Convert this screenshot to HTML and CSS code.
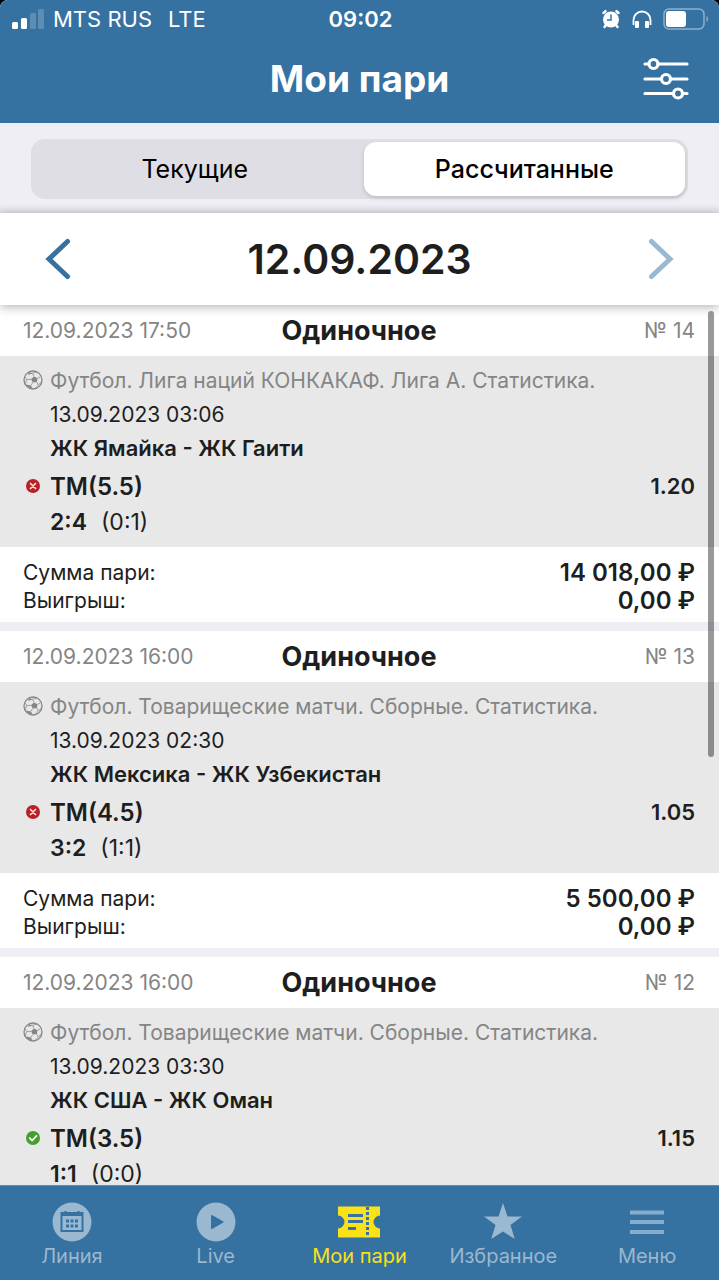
FILE: index.html
```html
<!DOCTYPE html>
<html lang="ru">
<head>
    <meta charset="UTF-8">
    <meta name="viewport" content="width=device-width, initial-scale=1">
    <title>Мои пари</title>
    <link rel="stylesheet" href="styles.css">
</head>
<body>
    <svg class="sprite" aria-hidden="true">
        <symbol id="ball" viewBox="0 0 20 20">
            <circle cx="10" cy="10" r="9" fill="none" stroke="#858585" stroke-width="1.3"/>
            <path d="M11 6.500l3.500 1.800-.7 3.700-4 .6-1.800-3.300z" fill="#858585"/>
            <path d="M11 6.500L9.500 3.200M14.500 8.300l3-1.500M13.800 12l1.500 3M9.800 12.600L7.600 15.600M8 9.300L3.500 9.500M9.500 3.200L5 4.200M9.500 3.200l4.500-1M3.500 9.500L2 6.500M3.500 9.500L2.500 14M7.600 15.600l1.800 3M15.300 15l-3 3M15.300 15l2.800-3" fill="none" stroke="#a0a0a0" stroke-width="1"/>
            <path d="M3 14.500l4.600 1 1.400 3c-2.500-.2-4.800-1.700-6-4zM6.500 2.200l3 1L5 4.800z" fill="#858585"/>
        </symbol>
        <symbol id="lost" viewBox="0 0 14 14">
            <circle cx="7" cy="7" r="7" fill="#b8202a"/>
            <path d="M4.500 4.500l5 5M9.500 4.500l-5 5" stroke="#fbe6c8" stroke-width="1.700" stroke-linecap="round"/>
        </symbol>
        <symbol id="won" viewBox="0 0 14 14">
            <circle cx="7" cy="7" r="7" fill="#43a02c"/>
            <path d="M3.700 7.200l2.400 2.300 4.400-4.600" fill="none" stroke="#fff" stroke-width="1.800" stroke-linecap="round"/>
        </symbol>
    </svg>

    <div class="app">
        <header class="header">
            <div class="status">
                <div class="status-left">
                    <svg width="33" height="22" viewBox="0 0 33 22" fill="#fff" aria-hidden="true">
                        <rect x="0" y="14" width="6" height="7" rx="1.500"/>
                        <rect x="9" y="10" width="6" height="11" rx="1.500"/>
                        <rect x="18" y="5" width="6" height="16" rx="1.500" opacity=".2"/>
                        <rect x="26" y="1" width="6" height="20" rx="1.500" opacity=".2"/>
                    </svg>
                    <span>MTS RUS</span>
                    <span class="network">LTE</span>
                </div>
                <div class="clock">09:02</div>
                <div class="status-right">
                    <svg width="20" height="20" viewBox="0 0 20 20" aria-hidden="true">
                        <circle cx="10" cy="10.500" r="8" fill="#fff"/>
                        <path d="M2.500 4l2-1.800M17.500 4l-2-1.800M4.500 16.500l-1 1.500M15.500 16.500l1 1.500" stroke="#fff" stroke-width="2.500" stroke-linecap="round"/>
                        <path d="M10 5.500v5.500H6" fill="none" stroke="#3571a1" stroke-width="1.500"/>
                    </svg>
                    <svg width="20" height="20" viewBox="0 0 20 20" aria-hidden="true">
                        <path d="M1.500 16v-5a8.500 8.500 0 0 1 17 0v5" fill="none" stroke="#fff" stroke-width="1.800"/>
                        <rect x="3" y="12" width="4" height="7" rx="1" fill="#fff"/>
                        <rect x="13" y="12" width="4" height="7" rx="1" fill="#fff"/>
                    </svg>
                    <svg width="46" height="22" viewBox="0 0 46 22" aria-hidden="true">
                        <rect x="1" y="1" width="40" height="20" rx="5" fill="none" stroke="#8fb1cb" stroke-width="1.500"/>
                        <rect x="3" y="3" width="20" height="16" rx="3" fill="#fff"/>
                        <path d="M43.500 8c2 1 2 5 0 6z" fill="#8fb1cb"/>
                    </svg>
                </div>
            </div>
            <div class="title-bar">
                <h1>Мои пари</h1>
                <button class="filter" type="button" aria-label="Фильтр">
                    <svg width="46" height="44" viewBox="0 0 46 44" fill="none" stroke="#fff" stroke-width="3.200" stroke-linecap="round">
                        <path d="M2 7h4M15 7h29M2 22h16M28 22h16M2 36.500h28M40 36.500h4"/>
                        <circle cx="10.500" cy="7" r="4.500"/>
                        <circle cx="23" cy="22" r="4.500"/>
                        <circle cx="35" cy="36.500" r="4.500"/>
                    </svg>
                </button>
            </div>
        </header>

        <div class="segments">
            <div class="segmented">
                <button type="button" class="segment">Текущие</button>
                <button type="button" class="segment active">Рассчитанные</button>
            </div>
        </div>

        <div class="date-bar">
            <button type="button" aria-label="Предыдущий день">
                <svg width="26" height="44" viewBox="0 0 26 44"><path d="M22.500 4.500L4 22l18.500 17.500" fill="none" stroke="#3571a1" stroke-width="5" stroke-linecap="round" stroke-linejoin="miter"/></svg>
            </button>
            <h2>12.09.2023</h2>
            <button type="button" aria-label="Следующий день">
                <svg width="26" height="44" viewBox="0 0 26 44"><path d="M3.500 4.500L22 22 3.500 39.500" fill="none" stroke="#9ab8d0" stroke-width="5" stroke-linecap="round" stroke-linejoin="miter"/></svg>
            </button>
        </div>

        <main class="list">
            <article class="bet">
                <div class="bet-head">
                    <span>12.09.2023 17:50</span>
                    <h3>Одиночное</h3>
                    <span class="number">№ 14</span>
                </div>
                <div class="event">
                    <svg class="ball"><use href="#ball"/></svg>
                    <p class="league">Футбол. Лига наций КОНКАКАФ. Лига А. Статистика.</p>
                    <p class="time">13.09.2023 03:06</p>
                    <p class="teams">ЖК Ямайка - ЖК Гаити</p>
                    <svg class="result"><use href="#lost"/></svg>
                    <p class="outcome"><span>ТМ(5.5)</span><span class="odds">1.20</span></p>
                    <p class="score"><b>2:4</b><span>(0:1)</span></p>
                </div>
                <dl class="sums">
                    <dt>Сумма пари:</dt><dd>14 018,00 ₽</dd>
                    <dt>Выигрыш:</dt><dd>0,00 ₽</dd>
                </dl>
            </article>

            <article class="bet">
                <div class="bet-head">
                    <span>12.09.2023 16:00</span>
                    <h3>Одиночное</h3>
                    <span class="number">№ 13</span>
                </div>
                <div class="event">
                    <svg class="ball"><use href="#ball"/></svg>
                    <p class="league">Футбол. Товарищеские матчи. Сборные. Статистика.</p>
                    <p class="time">13.09.2023 02:30</p>
                    <p class="teams">ЖК Мексика - ЖК Узбекистан</p>
                    <svg class="result"><use href="#lost"/></svg>
                    <p class="outcome"><span>ТМ(4.5)</span><span class="odds">1.05</span></p>
                    <p class="score"><b>3:2</b><span>(1:1)</span></p>
                </div>
                <dl class="sums">
                    <dt>Сумма пари:</dt><dd>5 500,00 ₽</dd>
                    <dt>Выигрыш:</dt><dd>0,00 ₽</dd>
                </dl>
            </article>

            <article class="bet">
                <div class="bet-head">
                    <span>12.09.2023 16:00</span>
                    <h3>Одиночное</h3>
                    <span class="number">№ 12</span>
                </div>
                <div class="event">
                    <svg class="ball"><use href="#ball"/></svg>
                    <p class="league">Футбол. Товарищеские матчи. Сборные. Статистика.</p>
                    <p class="time">13.09.2023 03:30</p>
                    <p class="teams">ЖК США - ЖК Оман</p>
                    <svg class="result"><use href="#won"/></svg>
                    <p class="outcome"><span>ТМ(3.5)</span><span class="odds">1.15</span></p>
                    <p class="score"><b>1:1</b><span>(0:0)</span></p>
                </div>
            </article>
            <div class="scroll-thumb"></div>
        </main>

        <nav class="tabs">
            <a href="#">
                <svg width="40" height="40" viewBox="0 0 40 40">
                    <circle cx="20" cy="20" r="19.500" fill="#9ab8d0"/>
                    <path d="M9.500 11h21v18h-21zM9.500 13h21M13.500 9v3M26.500 9v3" fill="none" stroke="#3571a1" stroke-width="2"/>
                    <path d="M14 17.500h3v3h-3zM18.500 17.500h3v3h-3zM23 17.500h3v3h-3zM14 22.500h3v3h-3zM18.500 22.500h3v3h-3zM23 22.500h3v3h-3z" fill="#3571a1"/>
                </svg>
                <span>Линия</span>
            </a>
            <a href="#">
                <svg width="40" height="40" viewBox="0 0 40 40">
                    <circle cx="20" cy="20" r="19.500" fill="#9ab8d0"/>
                    <path d="M16 14l10.500 6-10.500 6z" fill="#3571a1" stroke="#3571a1" stroke-width="2" stroke-linejoin="round"/>
                </svg>
                <span>Live</span>
            </a>
            <a href="#" class="active">
                <svg width="44" height="40" viewBox="0 0 44 40">
                    <path d="M1 4.500h42v9a6.500 6.500 0 0 0 0 13v9H1v-9a6.500 6.500 0 0 0 0-13z" fill="#fbe118"/>
                    <path d="M11 13.500h15M11 19.500h15M11 26.500h8" stroke="#3571a1" stroke-width="3"/>
                    <path d="M30.500 5v30" stroke="#3571a1" stroke-width="3" stroke-dasharray="3 2"/>
                </svg>
                <span>Мои пари</span>
            </a>
            <a href="#">
                <svg width="40" height="40" viewBox="0 0 40 40">
                    <path d="M20 1l4.500 13.500H39l-11.500 8.500 4.300 14L20 29.500 8.200 37l4.300-14L1 14.500h14.500z" fill="#9ab8d0"/>
                </svg>
                <span>Избранное</span>
            </a>
            <a href="#">
                <svg width="40" height="40" viewBox="0 0 40 40">
                    <path d="M3 10.500h34M3 20h34M3 30h34" stroke="#86adcb" stroke-width="4"/>
                </svg>
                <span>Меню</span>
            </a>
        </nav>
    </div>
</body>
</html>
```

FILE: styles.css
```css
* {
    box-sizing: border-box;
}

body {
    margin: 0;
    background: #000;
    font-family: Inter, "Liberation Sans", sans-serif;
    font-size: 21px;
    color: #1e1e1e;
}

h1, h2, h3, p, dl, dd {
    margin: 0;
}

button {
    border: 0;
    padding: 0;
    background: none;
    font: inherit;
    color: inherit;
    cursor: pointer;
}

svg {
    display: block;
}

.sprite {
    position: absolute;
    width: 0;
    height: 0;
}

.app {
    display: flex;
    flex-direction: column;
    height: 100vh;
    overflow: hidden;
    border-radius: 8px 8px 0 0;
    background: #efeef4;
}

/* header */

.header {
    background: #3571a1;
    color: #fff;
}

.status {
    display: grid;
    grid-template-columns: 1fr auto 1fr;
    align-items: center;
    height: 38px;
    padding: 0 10px 0 12px;
    font-size: 22px;
}

.status-left, .status-right {
    display: flex;
    align-items: center;
    gap: 8px;
}

.status-right {
    justify-content: flex-end;
    gap: 11px;
}

.network {
    margin-left: 8px;
}

.clock {
    font-weight: 600;
}

.title-bar {
    display: grid;
    grid-template-columns: 1fr auto 1fr;
    align-items: center;
    height: 85px;
    padding: 0 30px 3px;
}

.title-bar h1 {
    grid-column: 2;
    font-size: 37px;
    line-height: 44px;
    font-weight: 700;
}

.filter {
    justify-self: end;
}

/* segmented control */

.segments {
    padding: 16px 31px 14px;
    background: linear-gradient(#efeef4 90%, #e2e1e7);
}

.segmented {
    display: grid;
    grid-template-columns: 1fr 1fr;
    gap: 8px;
    height: 60px;
    padding: 3px;
    border-radius: 14px;
    background: #dedee4;
}

.segment {
    border-radius: 12px;
    font-size: 25px;
    color: #000;
}

.segment.active {
    background: #fff;
    font-weight: 500;
    box-shadow: 0 2px 4px rgba(0, 0, 0, 0.15);
}

/* date */

.date-bar {
    position: relative;
    z-index: 1;
    display: flex;
    justify-content: space-between;
    align-items: center;
    height: 92px;
    padding: 0 45px;
    background: #fff;
    box-shadow: 0 2px 10px rgba(0, 0, 0, 0.3);
}

.date-bar h2 {
    font-size: 41px;
    font-weight: 600;
}

/* bets */

.list {
    position: relative;
    flex: 1;
    min-height: 0;
    overflow: hidden;
}

.bet {
    margin-bottom: 9px;
    background: #fff;
}

.bet-head {
    display: grid;
    grid-template-columns: 1fr auto 1fr;
    align-items: center;
    height: 51px;
    padding: 0 24px 0 23px;
    color: #858585;
}

.bet-head h3 {
    font-size: 27px;
    font-weight: 700;
    color: #1e1e1e;
}

.number {
    text-align: right;
}

.event {
    display: grid;
    grid-template-columns: 27px 1fr;
    grid-template-rows: 34px 34px 34px 42px 30px;
    align-items: center;
    padding: 7px 24px 10px 23px;
    background: #e8e8e8;
}

.event p {
    grid-column: 2;
}

.ball {
    width: 20px;
    height: 20px;
}

.result {
    width: 14px;
    height: 14px;
    margin-left: 3px;
}

.league {
    color: #858585;
}

.teams {
    font-size: 22px;
    font-weight: 600;
}

.outcome {
    display: flex;
    justify-content: space-between;
    align-items: center;
    font-size: 24px;
    font-weight: 600;
}

.odds {
    font-size: 22px;
}

.score {
    display: flex;
    gap: 14px;
    font-size: 23px;
}

.score b {
    font-weight: 600;
}

.sums {
    display: grid;
    grid-template-columns: 1fr auto;
    padding: 12px 24px 7px 23px;
    line-height: 28px;
}

.sums dd {
    font-size: 24px;
    font-weight: 600;
    text-align: right;
}

.scroll-thumb {
    position: absolute;
    top: 6px;
    right: 5px;
    width: 6px;
    height: 446px;
    border-radius: 3px;
    background: rgba(0, 0, 0, 0.4);
}

/* bottom tabs */

.tabs {
    display: grid;
    grid-template-columns: repeat(5, 1fr);
    height: 95px;
    padding-top: 16px;
    border-top: 1px solid #6389a6;
    background: #3571a1;
}

.tabs a {
    display: flex;
    flex-direction: column;
    align-items: center;
    gap: 2px;
    font-size: 20px;
    line-height: 24px;
    color: #9ab8d0;
    text-decoration: none;
}

.tabs .active {
    color: #fbe118;
}
```
